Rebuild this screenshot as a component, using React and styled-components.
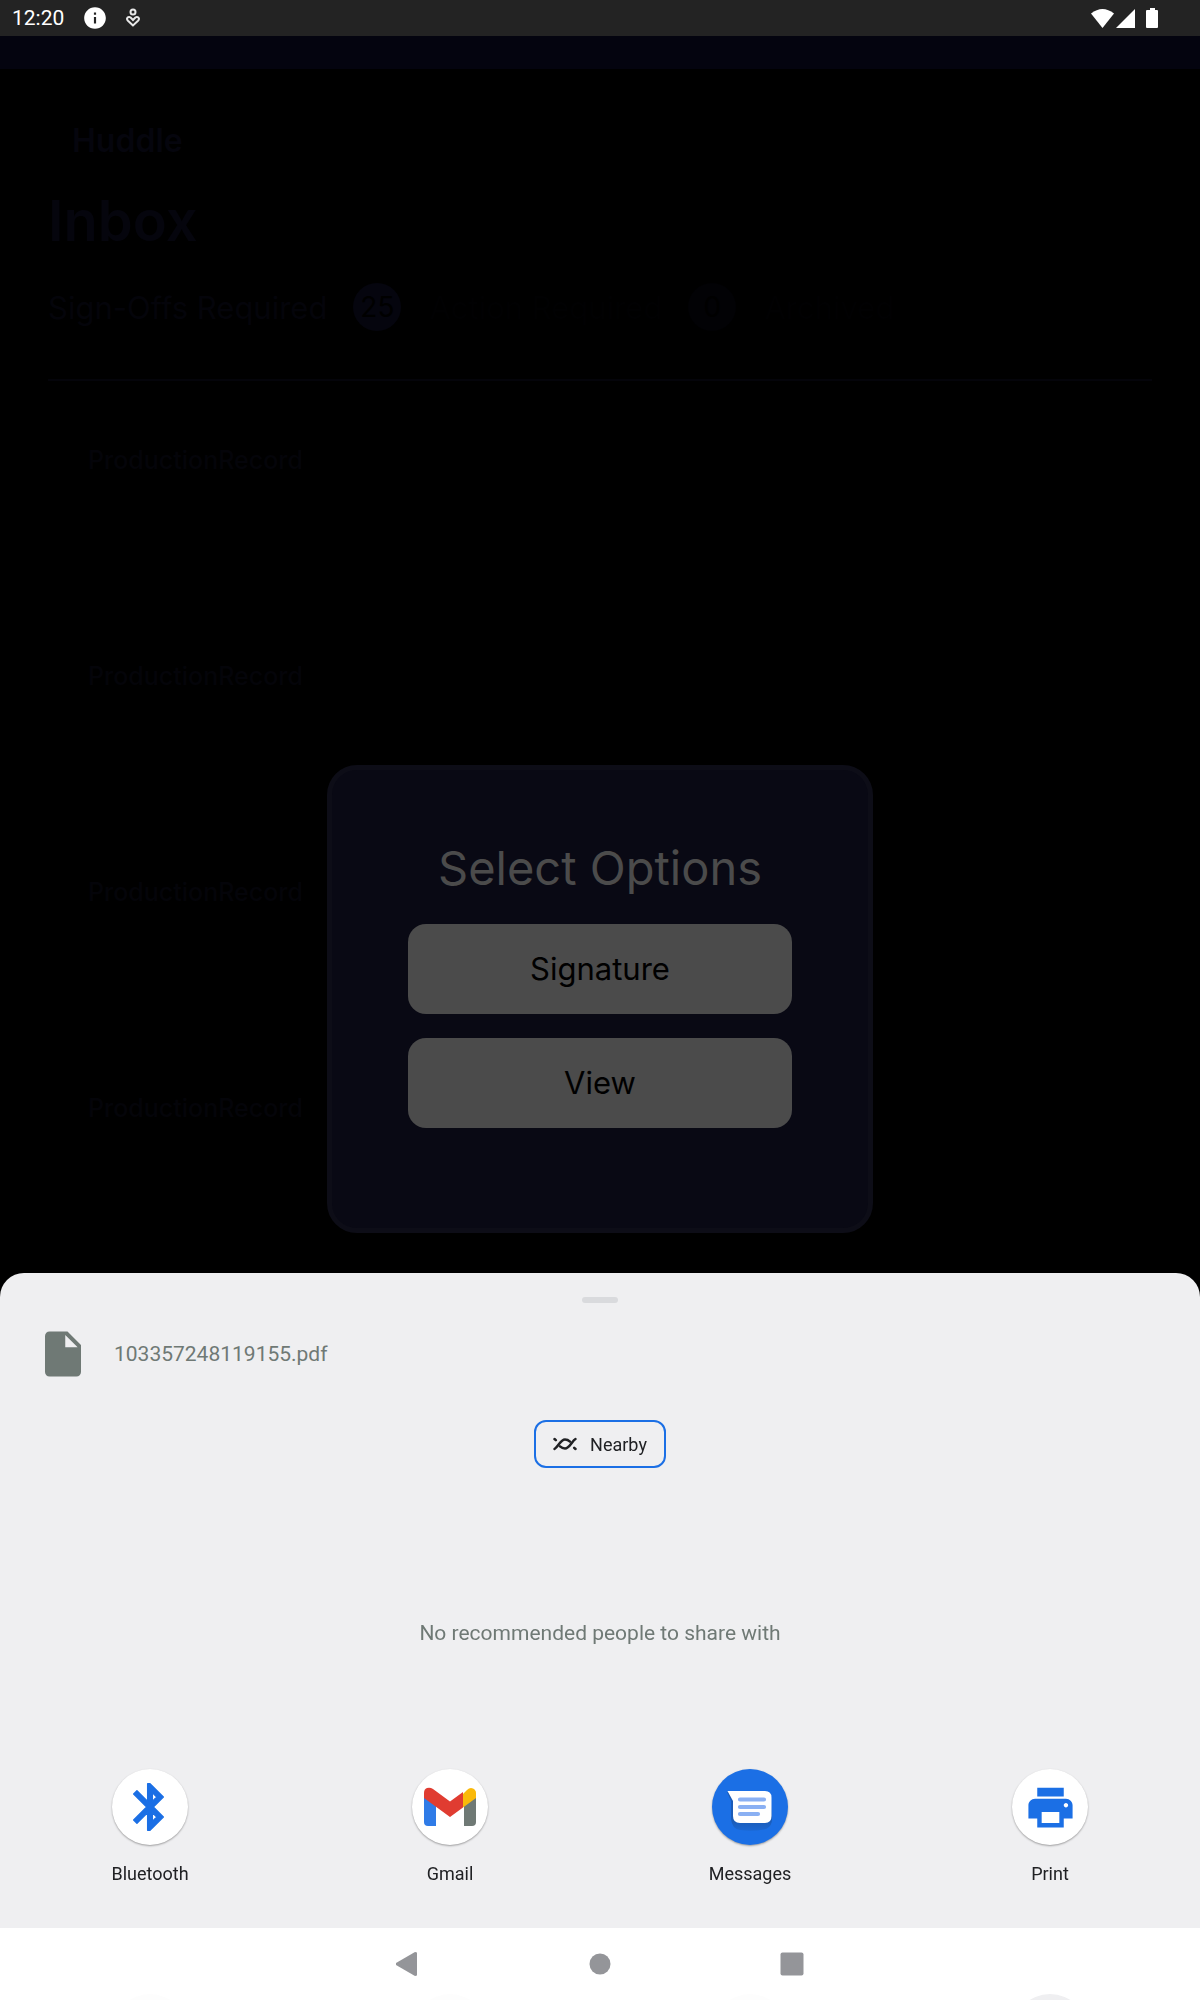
import styled, { createGlobalStyle } from "styled-components";
import { MdInfo, MdInsertDriveFile, MdPrint } from "react-icons/md";

const records = ["ProductionRecord", "ProductionRecord", "ProductionRecord", "ProductionRecord"];

const shareApps = [
  { name: "Bluetooth", icon: <BluetoothIcon /> },
  { name: "Gmail", icon: <GmailLogo /> },
  { name: "Messages", icon: <MessagesLogo />, filled: true },
  { name: "Print", icon: <MdPrint size={53} /> },
];

function BluetoothIcon() {
  return (
    <svg width="56" height="56" viewBox="0 0 24 24" fill="currentColor" aria-hidden="true">
      <path
        d="M17.710 7.710L12 2h-1v7.590L6.410 5 5 6.410 10.590 12 5 17.590 6.410 19 11 14.410V22h1l5.710-5.710-4.300-4.290 4.300-4.290zM13 5.830l1.880 1.880L13 9.590V5.830zm1.880 10.460L13 18.170v-3.760l1.880 1.880z"
        stroke="currentColor"
        strokeWidth="0.600"
        strokeLinejoin="round"
      />
    </svg>
  );
}

function GmailLogo() {
  return (
    <svg width="52" height="40" viewBox="0 0 52 40" aria-hidden="true">
      <path d="M0 10L12 19V39H4Q0 39 0 35Z" fill="#2f7be7" />
      <path d="M52 10L40 19V39H48Q52 39 52 35Z" fill="#6f7975" />
      <path d="M39 7L43 3Q46 0 49 1.500Q52 3 52 6V11L39 20.500Z" fill="#fab90a" />
      <path d="M0 11V6Q0 2 3 1Q6 0 9 2L26 14.500L39 5V20.500L26 30Z" fill="#e03c31" />
    </svg>
  );
}

function MessagesLogo() {
  return (
    <svg width="76" height="76" viewBox="0 0 76 76" aria-hidden="true">
      <defs>
        <linearGradient id="bubble-shadow" x1="0" y1="0" x2="0" y2="1">
          <stop offset="0.750" stopColor="#1b5cb8" />
          <stop offset="1" stopColor="#1b68d4" />
        </linearGradient>
      </defs>
      <path
        d="M15 23L19 32V50Q20 60 28 61Q42 63 54 60Q61 57 60 47L58 24Z"
        fill="url(#bubble-shadow)"
      />
      <path d="M15.500 22H53Q59.500 22 59.500 28.500V47Q59.500 54 53 54H28Q21 54 21 47V32Z" fill="#fff" />
      <path d="M28 30.500H52M28 38H52M28 45H46" stroke="#8ab0f3" strokeWidth="4.200" strokeLinecap="round" />
    </svg>
  );
}

function NearbyIcon() {
  return (
    <svg width="24" height="14" viewBox="0 0 24 14" aria-hidden="true">
      <g fill="none" stroke="#202124" strokeWidth="2.500" strokeLinecap="round">
        <path d="M1.500 12C5 10 7.500 2.500 12 2.500C14 2.500 15.500 3.200 17 4.600" />
        <path d="M22.500 2C19 4 16.500 11.500 12 11.500C10 11.500 8.500 10.800 7 9.400" />
        <path d="M1.500 2L2.800 3.200M21.200 10.800L22.500 12" />
      </g>
    </svg>
  );
}

function HeartIcon() {
  return (
    <svg width="14" height="20" viewBox="0 0 14 20" aria-hidden="true">
      <g fill="none" stroke="#e8e8e8" strokeWidth="2">
        <circle cx="7" cy="4" r="2.500" />
        <path d="M7 17.500L2 12.800Q.3 11 1.600 9.600Q3 8.300 4.600 9.500L7 12L9.400 9.500Q11 8.300 12.400 9.600Q13.700 11 12 12.800Z" />
      </g>
    </svg>
  );
}

function SignalIcons() {
  return (
    <svg width="68" height="20" viewBox="0 0 68 20" fill="#fff" aria-hidden="true">
      <path d="M0 5.500Q11.500-3.500 23 5.500L11.500 20Z" />
      <path d="M25 20L44 1V20Z" />
      <path d="M59 0H64V2H66Q67 2 67 3V19Q67 20 66 20H56Q55 20 55 19V3Q55 2 56 2H59Z" />
    </svg>
  );
}

function App() {
  return (
    <Screen>
      <GlobalStyle />
      <StatusBar>
        <Clock>12:20</Clock>
        <MdInfo size={26} />
        <HeartIcon />
        <Signals>
          <SignalIcons />
        </Signals>
      </StatusBar>
      <TopStrip />

      <Inbox>
        <Brand>Huddle</Brand>
        <Title>Inbox</Title>
        <Tabs>
          <Tab $active>
            Sign-Offs Required
            <Count $active>25</Count>
          </Tab>
          <Tab>
            Action Required
            <Count>0</Count>
          </Tab>
          <Tab>Archived</Tab>
        </Tabs>
        <Records>
          {records.map((record, i) => (
            <Record key={i}>{record}</Record>
          ))}
        </Records>
      </Inbox>

      <ModalLayer>
        <Modal role="dialog" aria-labelledby="options-title">
          <ModalTitle id="options-title">Select Options</ModalTitle>
          <Options>
            <Option type="button">Signature</Option>
            <Option type="button">View</Option>
          </Options>
        </Modal>
      </ModalLayer>

      <Bottom>
        <Sheet>
          <Handle />
          <FileRow>
            <MdInsertDriveFile size={54} />
            <span>103357248119155.pdf</span>
          </FileRow>
          <Nearby type="button">
            <NearbyIcon />
            Nearby
          </Nearby>
          <Empty>No recommended people to share with</Empty>
          <Apps>
            {shareApps.map((app) => (
              <AppButton key={app.name} type="button">
                <AppIcon $filled={app.filled}>{app.icon}</AppIcon>
                {app.name}
              </AppButton>
            ))}
          </Apps>
        </Sheet>
        <NavBar>
          <NavButtons>
            <NavButton type="button" aria-label="Back">
              <svg width="24" height="24" viewBox="0 0 24 24" fill="#949599">
                <path d="M0 11Q-1 12 0 13L19 24Q21 24 21 23V1Q21 0 19 0Z" />
              </svg>
            </NavButton>
            <NavButton type="button" aria-label="Home">
              <svg width="24" height="24" viewBox="0 0 24 24" fill="#949599">
                <circle cx="12" cy="12" r="10.500" />
              </svg>
            </NavButton>
            <NavButton type="button" aria-label="Recent apps">
              <svg width="24" height="24" viewBox="0 0 24 24" fill="#949599">
                <rect x="0.500" y="0.500" width="23" height="23" rx="2" />
              </svg>
            </NavButton>
          </NavButtons>
          <NextRow>
            <Peek />
            <Peek />
            <Peek />
            <Peek $visible />
          </NextRow>
        </NavBar>
      </Bottom>
    </Screen>
  );
}

export default App;

const GlobalStyle = createGlobalStyle`
  * {
    box-sizing: border-box;
  }

  body {
    margin: 0;
    background: #000;
    font-family: Roboto, sans-serif;
  }

  button {
    border: none;
    background: transparent;
    padding: 0;
    font-family: inherit;
    cursor: pointer;
  }

  svg {
    display: block;
    flex-shrink: 0;
  }
`;

const Screen = styled.div`
  min-height: 100vh;
  background: #000;
`;

const StatusBar = styled.div`
  display: flex;
  align-items: center;
  gap: 18px;
  height: 36px;
  padding: 0 41px 0 12px;
  background: #232323;
  color: #fff;
`;

const Clock = styled.span`
  font-size: 21px;
`;

const Signals = styled.div`
  margin-left: auto;
`;

const TopStrip = styled.div`
  height: 33px;
  background: #04040f;
`;

const Inbox = styled.main`
  padding: 52px 48px 0;
  font-family: Inter, sans-serif;
  color: #05050d;
`;

const Brand = styled.div`
  padding-left: 24px;
  font-size: 32px;
  font-weight: 600;
  line-height: 40px;
`;

const Title = styled.h1`
  margin: 30px 0 32px;
  font-size: 56px;
  font-weight: 600;
  line-height: 60px;
`;

const Tabs = styled.div`
  display: flex;
  gap: 28px;
  padding-bottom: 48px;
  border-bottom: 2px solid #04040a;
`;

const Tab = styled.button`
  display: flex;
  align-items: center;
  gap: 26px;
  height: 48px;
  font-size: 31px;
  white-space: nowrap;
  color: ${(props) => (props.$active ? "#04040a" : "#010102")};
`;

const Count = styled.span`
  display: flex;
  align-items: center;
  justify-content: center;
  width: 48px;
  height: 48px;
  border-radius: 50%;
  font-size: 28px;
  color: #000;
  background: ${(props) => (props.$active ? "#05050e" : "#020205")};
`;

const Records = styled.ul`
  margin: 0;
  padding: 0;
  list-style: none;
`;

const Record = styled.li`
  height: 216px;
  padding: 64px 40px 0;
  font-size: 25px;
  font-weight: 500;
  line-height: 30px;
  color: #040409;
`;

const ModalLayer = styled.div`
  position: fixed;
  inset: 0;
  display: flex;
  align-items: center;
  justify-content: center;
  padding-bottom: 2px;
`;

const Modal = styled.div`
  width: 546px;
  max-width: 90vw;
  padding: 70px 76px 100px;
  border: 5px solid #0d0d17;
  border-radius: 30px;
  background: #090914;
  font-family: Inter, sans-serif;
`;

const ModalTitle = styled.h2`
  margin: 0 0 28px;
  font-size: 47px;
  font-weight: 400;
  line-height: 56px;
  text-align: center;
  white-space: nowrap;
  color: #4b4b4b;
`;

const Options = styled.div`
  display: flex;
  flex-direction: column;
  gap: 24px;
`;

const Option = styled.button`
  height: 90px;
  padding-bottom: 2px;
  border-radius: 18px;
  background: #4b4b4b;
  color: #000;
  font-size: 31px;
`;

const Bottom = styled.div`
  position: fixed;
  left: 0;
  right: 0;
  bottom: 0;
`;

const Sheet = styled.section`
  display: flex;
  flex-direction: column;
  align-items: center;
  padding: 24px 0 42px;
  border-radius: 24px 24px 0 0;
  background: #efeff1;
`;

const Handle = styled.div`
  width: 36px;
  height: 6px;
  border-radius: 3px;
  background: #d9dadd;
`;

const FileRow = styled.div`
  align-self: stretch;
  display: flex;
  align-items: center;
  gap: 24px;
  margin-top: 24px;
  padding: 0 36px;
  font-size: 21px;
  color: #6f7975;
`;

const Nearby = styled.button`
  display: flex;
  align-items: center;
  gap: 13px;
  height: 48px;
  margin-top: 39px;
  padding: 0 17px;
  border: 2px solid #1b6fe5;
  border-radius: 12px;
  font-size: 18px;
  color: #202124;
`;

const Empty = styled.p`
  margin: 151px 0 122px;
  font-size: 21px;
  line-height: 28px;
  color: #6f7975;
`;

const Apps = styled.div`
  align-self: stretch;
  display: grid;
  grid-template-columns: repeat(4, 1fr);
`;

const AppButton = styled.button`
  display: flex;
  flex-direction: column;
  align-items: center;
  gap: 17px;
  font-size: 18px;
  line-height: 24px;
  color: #202124;
`;

const AppIcon = styled.span`
  display: flex;
  align-items: center;
  justify-content: center;
  width: 76px;
  height: 76px;
  border-radius: 50%;
  background: ${(props) => (props.$filled ? "#1b6fe5" : "#fff")};
  color: #1b6fe5;
  box-shadow: 0 1px 2px rgba(0, 0, 0, 0.35);
`;

const NavBar = styled.nav`
  height: 72px;
  padding-top: 24px;
  overflow: hidden;
  background: #fff;
`;

const NavButtons = styled.div`
  display: flex;
  justify-content: center;
  gap: 168px;
`;

const NavButton = styled.button`
  width: 24px;
  height: 24px;
`;

const NextRow = styled.div`
  display: grid;
  grid-template-columns: repeat(4, 1fr);
  justify-items: center;
  margin-top: 18px;
`;

const Peek = styled.div`
  width: 76px;
  height: 76px;
  border-radius: 50%;
  background: ${(props) => (props.$visible ? "#efeff1" : "#fdfdfd")};
`;
